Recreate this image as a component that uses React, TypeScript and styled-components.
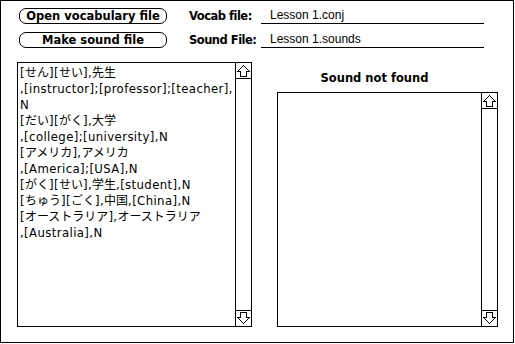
import React from "react";
import styled, { createGlobalStyle } from "styled-components";

const GlobalStyle = createGlobalStyle`
  html, body {
    margin: 0;
    padding: 0;
    background: #ffffff;
  }
  body {
    font-family: "DejaVu Sans", "Noto Sans CJK JP", sans-serif;
    color: #000000;
  }
`;

const VOCAB_LINES = [
  "[せん][せい],先生",
  ",[instructor];[professor];[teacher],",
  "N",
  "[だい][がく],大学",
  ",[college];[university],N",
  "[アメリカ],アメリカ",
  ",[America];[USA],N",
  "[がく][せい],学生,[student],N",
  "[ちゅう][ごく],中国,[China],N",
  "[オーストラリア],オーストラリア",
  ",[Australia],N",
];

// 영문(ASCII) 구간과 일본어 구간을 나눠서 폭을 따로 맞춤
function splitRuns(line: string) {
  return line.match(/[\x00-\x7f]+|[^\x00-\x7f]+/g) ?? [];
}

export default function App() {
  return (
    <>
      <GlobalStyle />
      <Window>
        <Header>
          <MacButton>Open vocabulary file</MacButton>
          <Label>Vocab file:</Label>
          <Field>Lesson 1.conj</Field>
          <MacButton>Make sound file</MacButton>
          <Label>Sound File:</Label>
          <Field>Lesson 1.sounds</Field>
        </Header>

        <Body>
          <ListBox $wide>
            <ListText>
              {VOCAB_LINES.map((line, i) => (
                <Line key={i}>
                  {splitRuns(line).map((run, j) =>
                    /^[\x00-\x7f]/.test(run) ? (
                      <Latin key={j}>{run}</Latin>
                    ) : (
                      <span key={j}>{run}</span>
                    )
                  )}
                </Line>
              ))}
            </ListText>
            <ScrollBar />
          </ListBox>

          <RightColumn>
            <Title>Sound not found</Title>
            <ListBox>
              <ListText />
              <ScrollBar />
            </ListBox>
          </RightColumn>
        </Body>
      </Window>
    </>
  );
}

// 스크롤바: 위 화살표 칸, 빈 트랙, 아래 화살표 칸
function ScrollBar() {
  return (
    <ScrollColumn>
      <ArrowCell $up>
        <Arrow />
      </ArrowCell>
      <Track />
      <ArrowCell>
        <Arrow down />
      </ArrowCell>
    </ScrollColumn>
  );
}

function Arrow({ down }: { down?: boolean }) {
  return (
    <svg
      width="13"
      height="13"
      viewBox="0 0 13 13"
      style={{ transform: down ? "rotate(180deg)" : undefined }}
    >
      <polygon
        points="6.5,1.5 12.5,7.5 9.5,7.5 9.5,12.5 3.5,12.5 3.5,7.5 0.5,7.5"
        fill="#fff"
        stroke="#000"
        strokeWidth="1"
        shapeRendering="crispEdges"
      />
    </svg>
  );
}

const Window = styled.div`
  width: 514px;
  height: 343px;
  box-sizing: border-box;
  border: 1px solid #000;
  padding: 7px 0 0 16px;
`;

const Header = styled.div`
  display: grid;
  grid-template-columns: 170px 72px 223px;
  grid-auto-rows: 16px;
  row-gap: 8px;
  align-items: center;
  padding-left: 2px;
`;

const MacButton = styled.button`
  width: 148px;
  height: 16px;
  box-sizing: border-box;
  border: 1px solid #000;
  border-radius: 7px;
  background: #fff;
  padding: 0;
  font-family: "DejaVu Sans", sans-serif;
  font-weight: bold;
  font-size: 11.5px;
  line-height: 14px;
  color: #000;
  text-align: center;
`;

const Label = styled.span`
  font-family: "DejaVu Sans", sans-serif;
  font-weight: bold;
  font-size: 11.5px;
  letter-spacing: -0.5px;
  white-space: nowrap;
`;

const Field = styled.span`
  display: block;
  height: 16px;
  box-sizing: border-box;
  border-bottom: 1px solid #000;
  padding-left: 9px;
  font-family: "Liberation Sans", sans-serif;
  font-size: 12px;
  line-height: 14px;
  white-space: nowrap;
`;

const Body = styled.div`
  display: flex;
  gap: 25px;
  margin-top: 14px;
`;

const RightColumn = styled.div`
  display: flex;
  flex-direction: column;
  width: 221px;
  height: 265px;
  justify-content: flex-end;
`;

const Title = styled.div`
  font-family: "DejaVu Sans", sans-serif;
  font-weight: bold;
  font-size: 11.5px;
  text-align: center;
  padding-right: 26px;
  margin-bottom: 7px;
`;

const ListBox = styled.div<{ $wide?: boolean }>`
  display: flex;
  width: ${(p) => (p.$wide ? 235 : 221)}px;
  height: ${(p) => (p.$wide ? 265 : 235)}px;
  box-sizing: border-box;
  border: 1px solid #000;
`;

const ListText = styled.div`
  flex: 1;
  padding: 1px 0 0 2px;
  font-family: "Noto Sans CJK JP", sans-serif;
  font-size: 12px;
  overflow: hidden;
`;

const Line = styled.div`
  height: 16px;
  line-height: 16px;
  white-space: nowrap;
`;

const Latin = styled.span`
  font-family: "DejaVu Sans", sans-serif;
  font-size: 11.7px;
  letter-spacing: 0.4px;
`;

const ScrollColumn = styled.div`
  width: 15px;
  display: flex;
  flex-direction: column;
  border-left: 1px solid #000;
`;

const ArrowCell = styled.div<{ $up?: boolean }>`
  height: 15px;
  display: flex;
  align-items: center;
  justify-content: center;
  border-${(p) => (p.$up ? "bottom" : "top")}: 1px solid #000;
`;

const Track = styled.div`
  flex: 1;
`;
